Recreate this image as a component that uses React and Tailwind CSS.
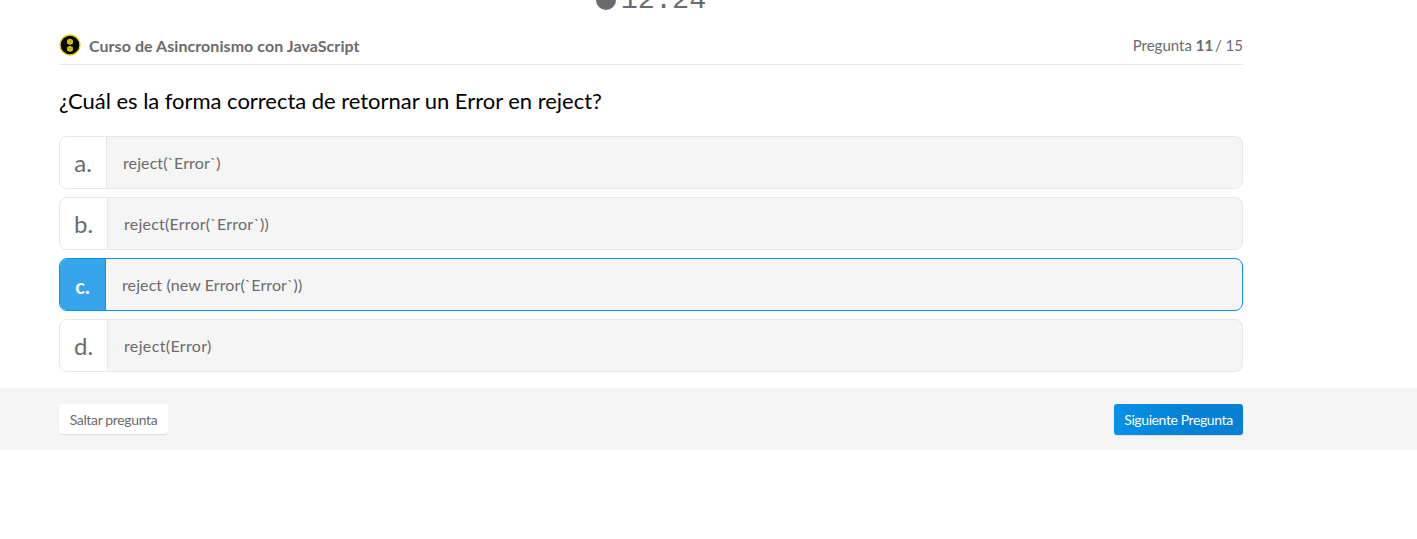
const options = [
  { letter: 'a.', text: 'reject(`Error`)', cell: 'w-[47px]', tracking: 'tracking-[0.1px]' },
  { letter: 'b.', text: 'reject(Error(`Error`))', cell: 'w-12', tracking: 'tracking-[0.23px]' },
  { letter: 'c.', text: 'reject (new Error(`Error`))', cell: 'w-[46px]', tracking: 'tracking-[0.1px]', selected: true },
  { letter: 'd.', text: 'reject(Error)', cell: 'w-12', tracking: 'tracking-[0.36px]' },
];

function CourseBadge() {
  return (
    <svg className="size-[22px] shrink-0" viewBox="0 0 22 22">
      <circle cx="11" cy="11" r="10" fill="#050500" stroke="#e4d51c" strokeWidth="1.3" />
      <path d="M11 4.6l2.9 1.5v3.3L11 11 8.1 9.4V6.1z" fill="#d9c51d" />
      <path d="M11 11.7l2.9 1.5v3.3L11 18l-2.9-1.5v-3.3z" fill="#d9c51d" />
      <path d="M8.7 6.5L11 7.7l2.3-1.2M11 7.7v2.3M8.7 13.6l2.3 1.2 2.3-1.2M11 14.8v2.3" fill="none" stroke="#a09018" strokeWidth=".6" />
    </svg>
  );
}

function Timer() {
  return (
    <div className="flex h-[34px] w-[1302px] justify-center overflow-hidden">
      <div className="-mt-[18px] flex h-[34px] items-center">
        <svg className="mt-px size-5" viewBox="0 0 20 20">
          <circle cx="10" cy="10" r="10" fill="#6b6b6b" />
          <path d="M10 3v7" fill="none" stroke="#fff" strokeWidth="1.5" />
        </svg>
        <span className="ml-[5px] pt-1 font-['Liberation_Mono',monospace] text-[28.5px] leading-[34px]">12:24</span>
      </div>
    </div>
  );
}

function Option({ letter, text, cell, tracking, selected }) {
  return (
    <li className={`flex h-[53px] overflow-hidden rounded-lg border bg-[#f5f5f5] ${selected ? 'border-[#0791e6]' : 'border-[#e8e8e8]'}`}>
      <span className={`flex shrink-0 items-center justify-center border-r ${cell} ${selected ? 'border-[#0791e6] bg-[#37a5ec] pt-[3px] text-xl font-bold text-white' : 'border-[#e8e8e8] bg-white pt-px text-2xl'}`}>
        {letter}
      </span>
      <span className={`flex items-center pl-4 text-base ${tracking}`}>{text}</span>
    </li>
  );
}

export default function App() {
  return (
    <div className="h-[539px] overflow-hidden bg-white font-['Lato',sans-serif] text-[#6b6b6b]">
      <Timer />
      <main className="ml-[59px] w-[1184px]">
        <header className="flex h-[31px] justify-between border-b border-[#e8e8e8]">
          <div className="flex h-[22px] items-center gap-2">
            <CourseBadge />
            <h2 className="pt-px text-base leading-5 font-bold tracking-[0.06px]">Curso de Asincronismo con JavaScript</h2>
          </div>
          <p className="text-[15px] leading-[22px]">Pregunta <b className="-mr-0.5">11</b> / 15</p>
        </header>
        <h1 className="mt-[21px] text-[22px] leading-[30px] tracking-[-0.03px] text-black">¿Cuál es la forma correcta de retornar un Error en reject?</h1>
        <ul className="mt-5 flex flex-col gap-2">
          {options.map((option) => <Option key={option.letter} {...option} />)}
        </ul>
      </main>
      <footer className="mt-4 h-[62px] bg-[#f5f5f5] pt-4">
        <div className="ml-[59px] flex w-[1184px] justify-between">
          <button className="h-[30px] w-[109px] rounded-[3px] bg-white text-[14px] tracking-[-0.35px] whitespace-nowrap shadow-[0_1px_1px_rgba(0,0,0,0.1)]">Saltar pregunta</button>
          <button className="h-[31px] w-[129px] rounded-[3px] bg-linear-to-r from-[#0791e6] to-[#0580d3] to-60% text-[14px] tracking-[-0.4px] whitespace-nowrap text-white shadow-[0_1px_1px_rgba(0,0,0,0.1)]">Siguiente Pregunta</button>
        </div>
      </footer>
    </div>
  );
}
